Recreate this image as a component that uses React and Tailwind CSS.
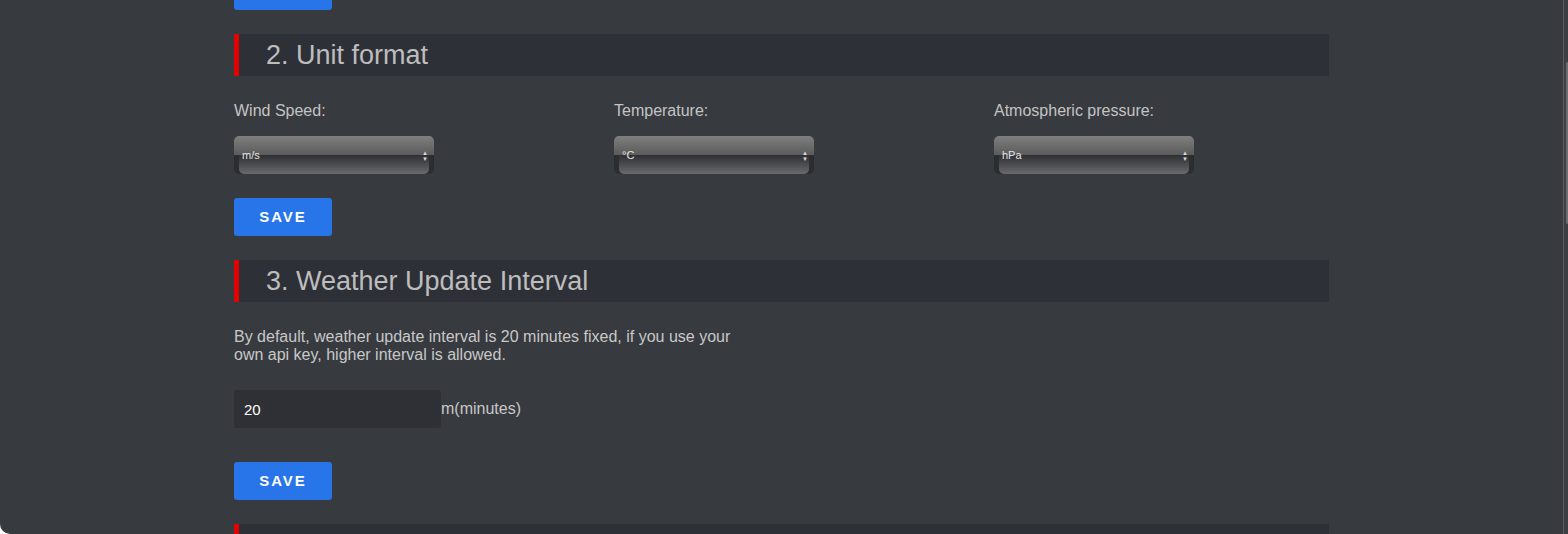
import React, { useState } from "react";

const SectionHeader = ({ children }) => (
    <div className="flex h-[42px] items-center bg-[#2e3037]">
        <div className="h-full w-[5px] bg-[#e30000]" />
        <h2 className="pl-[27px] text-[27px] leading-none text-[#bdbdbd]">{children}</h2>
    </div>
);

const SaveButton = () => (
    <button className="h-[38px] w-[98px] rounded-[3px] bg-[#2775e8] text-[15px] font-bold tracking-[2px] text-white">
        SAVE
    </button>
);

// glossy select, old webkit look
const FancySelect = ({ value }) => (
    <div className="relative h-[38px] w-[200px] overflow-hidden rounded-[5px] bg-[#2c2d31]">
        <div className="h-[19px] bg-gradient-to-b from-[#7f7f7f] to-[#5b5b5b]" />
        <div className="mx-[5px] h-[19px] rounded-b-[5px] bg-gradient-to-b from-[#2f3034] to-[#6a6a6c]" />
        <div className="absolute inset-0 flex items-center justify-between pl-[8px] pr-[6px] pt-[1px]">
            <span className="text-[11px] text-[#e4e4e4]">{value}</span>
            <span className="flex flex-col text-[6px] leading-[6px] text-[#dcdcdc]">
                <span>▲</span>
                <span>▼</span>
            </span>
        </div>
    </div>
);

const units = [
    { label: "Wind Speed:", value: "m/s" },
    { label: "Temperature:", value: "°C" },
    { label: "Atmospheric pressure:", value: "hPa" },
];

export default function App() {
    const [interval, setIntervalValue] = useState("20");

    return (
        <div className="h-[534px] overflow-hidden bg-white font-['Liberation_Sans',Arial,sans-serif]">
            <div className="flex h-full rounded-bl-[10px] bg-[#373a3f]">
                <div className="flex-1 pl-[234px] pr-[234px]">
                    <div className="-mt-[28px] w-[1095px]">
                        <SaveButton />

                        {/* Unit format */}
                        <div className="mt-[24px]">
                            <SectionHeader>2. Unit format</SectionHeader>
                        </div>
                        <div className="mt-[26px] flex">
                            {units.map((u) => (
                                <div key={u.label} className="w-[380px] shrink-0">
                                    <p className="text-[16px] leading-[18px] text-[#c4c4c4]">{u.label}</p>
                                    <div className="mt-[16px]">
                                        <FancySelect value={u.value} />
                                    </div>
                                </div>
                            ))}
                        </div>
                        <div className="mt-[24px]">
                            <SaveButton />
                        </div>

                        {/* Update interval */}
                        <div className="mt-[24px]">
                            <SectionHeader>3. Weather Update Interval</SectionHeader>
                        </div>
                        <p className="mt-[26px] w-[505px] text-[16px] leading-[18px] text-[#c8c8c8]">
                            By default, weather update interval is 20 minutes fixed, if you use your own api key, higher interval is allowed.
                        </p>
                        <div className="mt-[26px] flex items-center">
                            <input
                                value={interval}
                                onChange={(e) => setIntervalValue(e.target.value)}
                                className="h-[38px] w-[207px] rounded-[3px] bg-[#2e3036] px-[10px] text-[15px] text-white outline-none"
                            />
                            <span className="text-[16px] text-[#c8c8c8]">m(minutes)</span>
                        </div>
                        <div className="mt-[34px]">
                            <SaveButton />
                        </div>

                        <div className="mt-[24px]">
                            <SectionHeader />
                        </div>
                    </div>
                </div>

                {/* scrollbar */}
                <div className="relative w-[5px] border-l border-[#5a5b5f] bg-[#3d3e42]">
                    <div className="absolute left-[2px] top-[62px] h-[162px] w-[2px] rounded-full bg-[#6c6d70]" />
                </div>
            </div>
        </div>
    );
}
